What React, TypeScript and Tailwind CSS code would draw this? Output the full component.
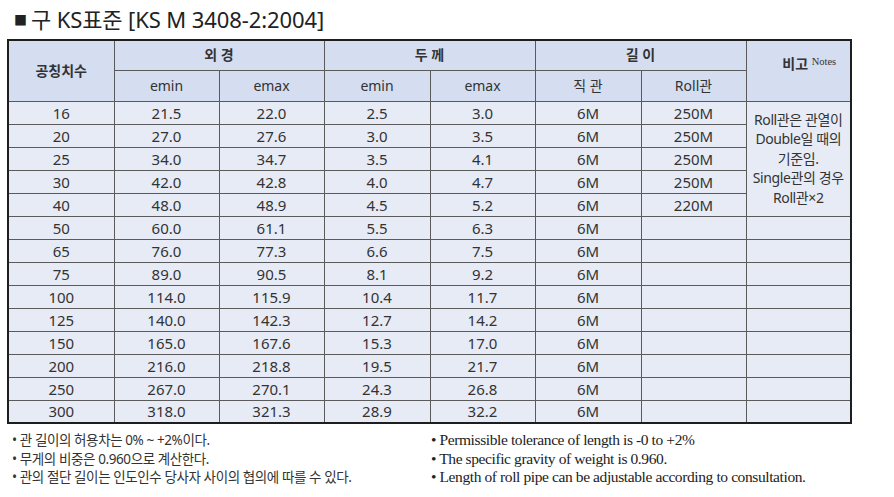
const rows: [string, string, string, string, string, string][] = [
  ["16", "21.5", "22.0", "2.5", "3.0", "250M"],
  ["20", "27.0", "27.6", "3.0", "3.5", "250M"],
  ["25", "34.0", "34.7", "3.5", "4.1", "250M"],
  ["30", "42.0", "42.8", "4.0", "4.7", "250M"],
  ["40", "48.0", "48.9", "4.5", "5.2", "220M"],
  ["50", "60.0", "61.1", "5.5", "6.3", ""],
  ["65", "76.0", "77.3", "6.6", "7.5", ""],
  ["75", "89.0", "90.5", "8.1", "9.2", ""],
  ["100", "114.0", "115.9", "10.4", "11.7", ""],
  ["125", "140.0", "142.3", "12.7", "14.2", ""],
  ["150", "165.0", "167.6", "15.3", "17.0", ""],
  ["200", "216.0", "218.8", "19.5", "21.7", ""],
  ["250", "267.0", "270.1", "24.3", "26.8", ""],
  ["300", "318.0", "321.3", "28.9", "32.2", ""],
];

const cell = "border border-[#5a5a5a] text-center p-0";
const head = "border border-[#5a5a5a] bg-[#d5ddf0] text-center p-0";

export default function App() {
  return (
    <div className="w-[894px] h-[497px] bg-white text-[#333] font-['Noto_Sans','Noto_Sans_CJK_KR',sans-serif] overflow-hidden">
      <div className="h-[39px] flex items-center pl-[14px] text-[22px] text-[#222] tracking-[-0.1px]">
        <span className="text-[13px] mr-[4px] mt-[3px]">■</span>
        <span>구 KS표준 [KS M 3408-2:2004]</span>
      </div>

      <div className="pl-[7px]">
        <table className="w-[843px] table-fixed border-collapse border-2 border-[#1e1e1e]">
          <colgroup>
            <col className="w-[106px]" />
            <col className="w-[105px]" />
            <col className="w-[105px]" />
            <col className="w-[106px]" />
            <col className="w-[105px]" />
            <col className="w-[106px]" />
            <col className="w-[105px]" />
            <col className="w-[105px]" />
          </colgroup>
          <thead className="leading-[20px]">
            <tr className="h-[30px]">
              <th rowSpan={2} className={`${head} text-[14px] font-bold`}>공칭치수</th>
              <th colSpan={2} className={`${head} text-[14px] font-semibold`}>외 경</th>
              <th colSpan={2} className={`${head} text-[14px] font-semibold`}>두 께</th>
              <th colSpan={2} className={`${head} text-[14px] font-semibold`}>길 이</th>
              <th rowSpan={2} className={`${head} font-semibold align-middle`}>
                <div className="-mt-[13px] pl-[22px] text-[14px]">
                  비고{" "}
                  <sup className="font-['Liberation_Serif',serif] font-normal text-[10.5px] -top-[4px]">Notes</sup>
                </div>
              </th>
            </tr>
            <tr className="h-[31px]">
              <th className={`${head} text-[14px] font-normal`}>emin</th>
              <th className={`${head} text-[14px] font-normal`}>emax</th>
              <th className={`${head} text-[14px] font-normal`}>emin</th>
              <th className={`${head} text-[14px] font-normal`}>emax</th>
              <th className={`${head} text-[14px] font-normal`}>직 관</th>
              <th className={`${head} text-[14px] font-normal`}>Roll관</th>
            </tr>
          </thead>
          <tbody className="bg-[#e7ebf6] text-[15px] leading-[20px]">
            {rows.map((r, i) => (
              <tr key={r[0]} className="h-[23px]">
                {r.slice(0, 5).map((v, j) => (
                  <td key={j} className={cell}>{v}</td>
                ))}
                <td className={cell}>6M</td>
                <td className={cell}>{r[5]}</td>
                {i === 0 && (
                  <td rowSpan={5} className={`${cell} text-[14px] leading-[19.5px] tracking-[-0.4px]`}>
                    Roll관은 관열이
                    <br />
                    Double일 때의
                    <br />
                    기준임.
                    <br />
                    Single관의 경우
                    <br />
                    Roll관×2
                  </td>
                )}
                {i >= 5 && <td className={cell}></td>}
              </tr>
            ))}
          </tbody>
        </table>
      </div>

      <div className="flex pt-[7px]">
        <ul className="w-[425px] pl-[12px] text-[13.5px] leading-[18.5px] tracking-[-0.4px] text-[#333]">
          <li>• 관 길이의 허용차는 0% ~ +2%이다.</li>
          <li>• 무게의 비중은 0.960으로 계산한다.</li>
          <li>• 관의 절단 길이는 인도인수 당사자 사이의 협의에 따를 수 있다.</li>
        </ul>
        <ul className="pl-[6px] text-[15.5px] leading-[18.5px] tracking-[-0.4px] text-[#222] font-['Liberation_Serif',serif]">
          <li>• Permissible tolerance of length is -0 to +2%</li>
          <li>• The specific gravity of weight is 0.960.</li>
          <li>• Length of roll pipe can be adjustable according to consultation.</li>
        </ul>
      </div>
    </div>
  );
}
